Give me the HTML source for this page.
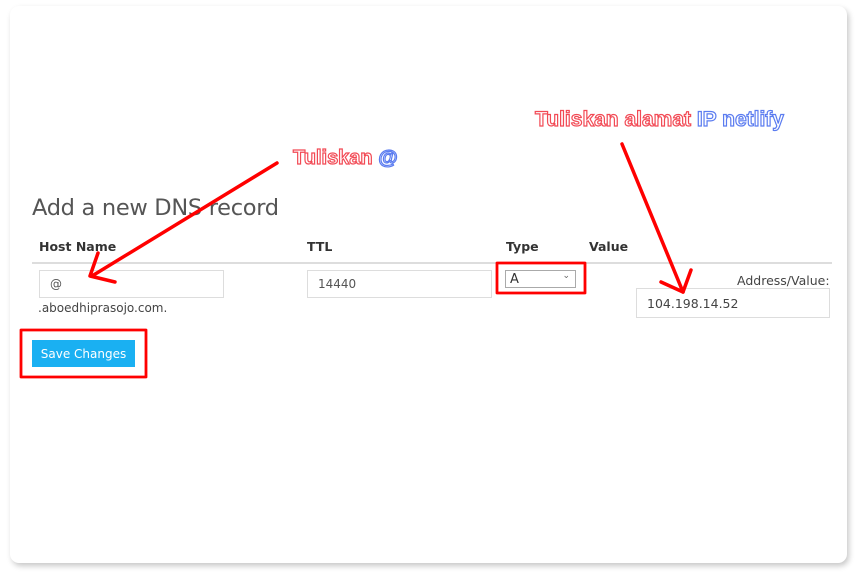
<!DOCTYPE html>
<html><head><meta charset="utf-8"><style>
*{margin:0;padding:0;box-sizing:border-box}
body{width:857px;height:578px;background:#fff;position:relative;overflow:hidden;font-family:"DejaVu Sans","Liberation Sans",sans-serif;color:#333}
.card{position:absolute;left:10px;top:6px;width:837px;height:557px;background:#fff;border-radius:9px;box-shadow:2px 3px 6px rgba(0,0,0,.22)}
.a{position:absolute;white-space:nowrap}
h1{position:absolute;left:32px;top:195px;font-weight:normal;font-size:22.5px;color:#555;font-family:"DejaVu Sans","Liberation Sans",sans-serif;letter-spacing:-0.3px}
.th{font-weight:bold;font-size:12.5px;color:#333;top:239px}
.inp{position:absolute;border:1px solid #ddd;background:#fff;font-size:12px;color:#555;padding-left:10px;display:flex;align-items:center}
.out{font-family:"Liberation Sans",sans-serif;font-weight:bold;font-size:21px;color:transparent;-webkit-text-stroke:1.2px #f24a55;letter-spacing:0}
.blue{-webkit-text-stroke:1.2px #5b7cf0}
</style></head><body>
<div class="card"></div>
<div class="a out" style="left:293px;top:147px;font-size:20px">Tuliskan <span class="blue">@</span></div>
<div class="a out" style="left:535px;top:108px">Tuliskan alamat <span class="blue">IP netlify</span></div>
<h1>Add a new DNS record</h1>
<div class="a th" style="left:39px">Host Name</div>
<div class="a th" style="left:307px">TTL</div>
<div class="a th" style="left:506px">Type</div>
<div class="a th" style="left:589px">Value</div>
<div class="a" style="left:32px;top:262px;width:800px;height:2px;background:#ddd"></div>
<div class="inp" style="left:39px;top:270px;width:185px;height:28px">@</div>
<div class="a" style="left:38px;top:301px;font-size:12px;color:#444">.aboedhiprasojo.com.</div>
<div class="inp" style="left:307px;top:270px;width:185px;height:28px">14440</div>
<div class="inp" style="left:505px;top:270px;width:71px;height:18px;border-color:#aaa;padding-left:4px;font-size:13px;color:#333">A<span style="position:absolute;right:5px;top:0;font-size:9px;color:#666">⌄</span></div>
<div class="a" style="left:737px;top:273px;font-size:12.5px;color:#444">Address/Value:</div>
<div class="inp" style="left:636px;top:288px;width:194px;height:30px;font-size:12.5px;color:#444">104.198.14.52</div>
<div class="a" style="left:32px;top:340px;width:103px;height:27px;background:#1ab0f2;color:#fff;font-size:12px;display:flex;align-items:center;justify-content:center">Save Changes</div>
<svg class="a" style="left:0;top:0" width="857" height="578">
<g fill="none" stroke="#f00" stroke-width="3.5" stroke-linecap="round" stroke-linejoin="round">
<rect x="21" y="330" width="125" height="47" stroke-width="2.8"/>
<rect x="497" y="263" width="88" height="30" stroke-width="2.8"/>
<line x1="277" y1="163" x2="92" y2="276"/>
<polyline points="98,253 90,276 115,282"/>
<line x1="622" y1="144" x2="683" y2="292"/>
<polyline points="661,282 683,292 691,270"/>
</g></svg>
</body></html>
